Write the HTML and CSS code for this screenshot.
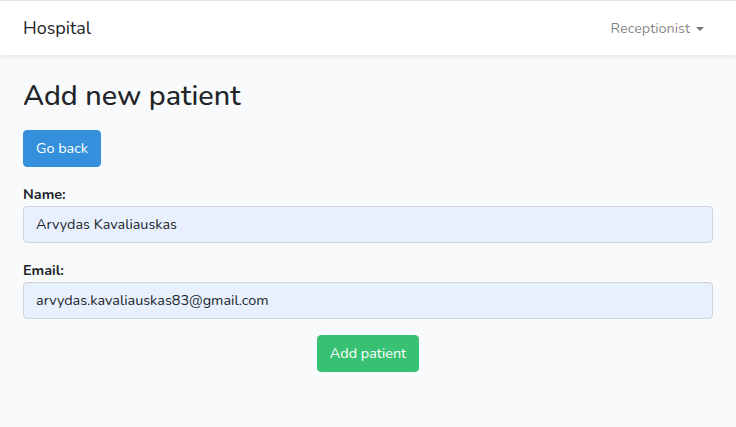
FILE: index.html
```html
<!DOCTYPE html>
<html lang="en">
<head>
<meta charset="utf-8">
<title>Hospital</title>
<link rel="stylesheet" href="styles.css">
</head>
<body>
<nav class="navbar">
  <div class="container nav-inner">
    <a class="brand" href="#">Hospital</a>
    <a class="nav-link" href="#">Receptionist<span class="caret"></span></a>
  </div>
</nav>
<main class="main">
  <div class="container">
    <h2 class="title">Add new patient</h2>
    <a class="btn btn-primary" href="#">Go back</a>
    <form class="form">
      <div class="form-group">
        <label class="label" for="name">Name:</label>
        <input class="input" id="name" type="text" value="Arvydas Kavaliauskas">
      </div>
      <div class="form-group">
        <label class="label" for="email">Email:</label>
        <input class="input" id="email" type="email" value="arvydas.kavaliauskas83@gmail.com">
      </div>
      <div class="actions">
        <button class="btn btn-success" type="button">Add patient</button>
      </div>
    </form>
  </div>
</main>
</body>
</html>
```
FILE: styles.css
```css
* { box-sizing: border-box; }
html, body { margin: 0; padding: 0; }
body {
  font-family: "Nunito", "Lato", "Noto Sans", sans-serif;
  font-size: 14.4px;
  line-height: 1.6;
  color: #212529;
  background: #f8fafc;
}
.container {
  width: 720px;
  margin: 0 auto;
  padding: 0 15px;
}
.navbar {
  background: #fff;
  box-shadow: 0 2px 4px rgba(0,0,0,.075);
  border-top: 1px solid #dfe1e3;
  padding: 7px 0 8px;
}
.nav-inner {
  display: flex;
  align-items: center;
  justify-content: space-between;
}
.brand {
  font-size: 18px;
  line-height: 28.8px;
  padding: 6px 0 4px;
  color: #212529;
  text-decoration: none;
}
.nav-link {
  color: rgba(0,0,0,.5);
  text-decoration: none;
  padding: 9px 9px 7px 8px;
  display: flex;
  align-items: center;
}
.caret {
  display: inline-block;
  margin-left: 6px;
  width: 0;
  height: 0;
  border-top: 4.8px solid rgba(0,0,0,.55);
  border-left: 4.8px solid transparent;
  border-right: 4.8px solid transparent;
  margin-top: 1px;
}
.main { padding: 24px 0; }
.title {
  font-size: 28.8px;
  font-weight: 500;
  line-height: 1.2;
  margin: 0 0 16px;
}
.btn {
  display: inline-block;
  font-family: inherit;
  font-size: 14.4px;
  line-height: 1.6;
  padding: 6px 12px;
  border: 1px solid transparent;
  border-radius: 4px;
  color: #fff;
  text-decoration: none;
  cursor: pointer;
}
.btn-primary { background: #3490dc; border-color: #3490dc; }
.btn-success { background: #38c172; border-color: #38c172; }
.form { margin-top: 16px; }
.form-group { margin-bottom: 16px; display: flex; flex-direction: column; }
.label { font-weight: 700; margin: 0; }
.input {
  font-family: inherit;
  font-size: 14.4px;
  line-height: 1.6;
  height: 37px;
  padding: 6px 12px;
  color: #212529;
  background: #e8f0fe;
  border: 1px solid #ced4da;
  border-radius: 4px;
  width: 100%;
}
.actions { display: flex; justify-content: center; }
```
